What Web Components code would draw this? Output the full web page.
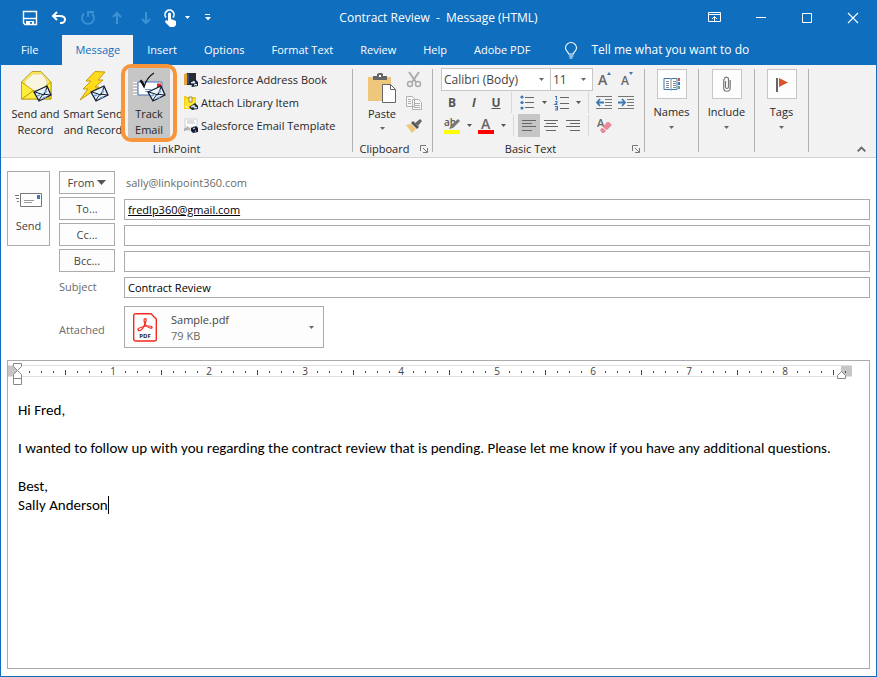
<!DOCTYPE html>
<html lang="en">
<head>
<meta charset="utf-8">
<title>Contract Review - Message (HTML)</title>
<style>
  html, body { height: 100%; margin: 0; }
  body {
    font: 11px/16px "Open Sans", "Noto Sans", sans-serif;
    color: #262626;
    --accent: #106ebe;
    --ribbon: #f2f2f2;
    --line: #ababab;
    --pressed: #c6c6c6;
  }
</style>
</head>
<body>
<mail-window></mail-window>

<script>
const MINI_ENVELOPE = `
  <path d="M1 8 14 2l4 9-12 6z" fill="#e8f3fb" stroke="#111a33" stroke-width="1.300"/>
  <path d="M2 8l9 3 3-8M6 16l4-6 7 1" fill="none" stroke="#111a33" stroke-width="1"/>
  <path d="M4 12l3-1M12 7l2 1M10 14l3-1" stroke="#6aa7d8" stroke-width="1.500"/>`;

const ICONS = {
  save: [16, 16, `<path d="M1.500 1.500h13v13H3L1.500 13z" fill="none" stroke="#fff" stroke-width="1.400"/><path d="M2 8.500h12" stroke="#fff" stroke-width="1.400"/><path d="M4 11h8v4h-2v-3H8v3H4z" fill="#fff"/>`],
  undo: [16, 14, `<path d="M6 1 2 5l4 4M2 5h7c7 0 6 7 1 7H9" fill="none" stroke="#fff" stroke-width="2"/>`],
  redo: [16, 16, `<path d="M4 3.500A6 6 0 1 0 12 3.500M8 7V2h6" fill="none" stroke="#3f92d2" stroke-width="1.800"/>`],
  up: [12, 14, `<path d="M6 13V2M2 6l4-4 4 4" fill="none" stroke="#3f92d2" stroke-width="2"/>`],
  down: [12, 14, `<path d="M6 1v11M2 8l4 4 4-4" fill="none" stroke="#3f92d2" stroke-width="2"/>`],
  touch: [14, 18, `<path d="M3 8.500a4.500 4.500 0 1 1 7 0" fill="none" stroke="#fff" stroke-width="1.600"/><path d="M5 5a1.500 1.500 0 0 1 3 0v5l5 2v4l-2 2H7l-5-5 1-2 2 1z" fill="#fff"/>`],
  caret: [5, 3, `<path d="M0 0h5L2.500 3z" fill="currentColor"/>`],
  customize: [6, 7, `<path d="M0 .5h5" stroke="#fff"/><path d="M0 3h6L3 6.500z" fill="#fff"/>`],
  display: [14, 11, `<path d="M.5.5h12v9H.5zM.5 2.500h12M6.500 9.500V5M4 7l2.500-2.500L9 7" fill="none" stroke="#fff"/>`],
  minimize: [10, 1, `<path d="M0 .5h10" stroke="#fff"/>`],
  maximize: [10, 10, `<path d="M.5.5h9v9h-9z" fill="none" stroke="#fff"/>`],
  close: [10, 10, `<path d="M0 0l10 10M10 0 0 10" stroke="#fff" stroke-width="1.100"/>`],
  bulb: [12, 17, `<path d="M3.500 12c0-2.500-3-3-3-6a5.400 5.400 0 0 1 11 0c0 3-3 3.500-3 6zM4 14h4.500M4.500 16h3" fill="none" stroke="#fff" stroke-width="1.100"/>`],
  sendRecord: [32, 32, `<path d="M1.500 12 12 1.500h9l10 10.500v17h-29.500z" fill="#ffe640" stroke="#b3a13a"/><path d="M5 11 13 4h9l5 7v8l-11 4-11-4z" fill="#faf5df" stroke="#e3d9a0"/><path d="M1.500 12v17H31V12L19 21h-5z" fill="#ffec3d" stroke="#c5a60a"/><path d="M2 29l12-9M31 29 19 20" stroke="#b79a10"/><g transform="translate(13 14)">${MINI_ENVELOPE}</g>`],
  smartSend: [32, 32, `<path d="M18 1.500 28 2l-7 8h5l-8 7h4L3 30l8-11H6l8-8H9z" fill="#ffdb1b" stroke="#c49a10"/><g transform="translate(13 14)">${MINI_ENVELOPE}</g>`],
  trackEmail: [34, 32, `<path d="M1 12.500h4M1 15.500h4M1 18.500h4M1 21.500h4M1 24.500h4" stroke="#fff"/><path d="M6 12h24v13H6z" fill="#fff" stroke="#4d73b4"/><path d="M25 13.500h4v4h-4z" fill="#e2231a"/><path d="M13 19.500h6M13 21.500h4" stroke="#7395c8"/><path d="M9 11l3 6c2-7 5-11 10-14" fill="none" stroke="#111" stroke-width="1.300"/><path d="M7.500 11l2-1.500 3 4.500v3.500z" fill="#111"/><g transform="translate(15 14)">${MINI_ENVELOPE}</g>`],
  addressBook: [14, 16, `<path d="M0 2l3-1v12H0z" fill="#e8a33a"/><path d="M3 1h9v12H3z" fill="#2b2b33"/><path d="M3.500 2h1v10h-1z" fill="#4a76b8"/><path d="M5 11l6-4 3 3v4l-6 1z" fill="#1c2537"/><path d="M7 11l3-2 1 2zM10 13l2-1 1 1zM7 13l1 1" fill="#dbeaf5" stroke="#dbeaf5" stroke-width=".8"/>`],
  library: [14, 16, `<path d="M0 1h2l1 1h9v12H0z" fill="#f0cf15"/><path d="M1 4h10v9H1z" fill="#ffe52e"/><path d="M5 2h3v5H5z" fill="#eef3f5" stroke="#8a7a25" stroke-width=".8"/><path d="M1 11l3 2" stroke="#fff"/><path d="M5 12l6-4 3 3v3l-6 1z" fill="#1c2537"/><path d="M7 12l3-2 1 2zM10 13l2-1 1 1z" fill="#dbeaf5" stroke="#dbeaf5" stroke-width=".8"/>`],
  template: [14, 16, `<path d="M1 1h12v9H1z" fill="#fff" stroke="#d0d0d0"/><path d="M3 3h7M3 5h8" stroke="#b6bcc4"/><path d="M0 7l6 2 4-1v5H1z" fill="#dcdcdc"/><path d="M0 13l4-4M0 11h6" stroke="#999"/><path d="M7 10l5-2 2 2v4l-5 1-2-2z" fill="#131b36"/><path d="M9 11l2-1M11 13h1" stroke="#fff"/>`],
  paste: [28, 30, `<path d="M0 4h23v24H0z" fill="#eec67c"/><path d="M5 7V3h4V1l2-1h3l1 1v2h4v4z" fill="#666"/><path d="M11 2h2v2h-2z" fill="#fff"/><path d="M14.500 11.500h8l5 5v13h-13z" fill="#fff" stroke="#666"/><path d="M22.500 11.500v5h5" fill="none" stroke="#666"/>`],
  cut: [16, 16, `<path d="M3 0l7 10M13 0 6 10" stroke="#aaa" stroke-width="2"/><circle cx="4" cy="12" r="2.500" fill="none" stroke="#aaa" stroke-width="1.500"/><circle cx="12" cy="12" r="2.500" fill="none" stroke="#aaa" stroke-width="1.500"/>`],
  copy: [16, 14, `<path d="M.5.5h6l2 2v8h-8zM6.500 3.500h6l3 3v7h-9z" fill="#f8f8f8" stroke="#b0b0b0"/><path d="M2 3.500h3M2 5.500h3M2 7.500h3M8 7.500h6M8 9.500h6M8 11.500h6" stroke="#b0b0b0"/>`],
  painter: [16, 14, `<path d="M0 6l5-1 5 5-4 4z" fill="#eec67c"/><path d="M5 4l2-2 6 6-2 2z" fill="#555"/><path d="M9 4l5-4 2 2-4 5z" fill="#666"/>`],
  bullets: [15, 15, `<circle cx="2" cy="2" r="1.600" fill="#3c78b4"/><circle cx="2" cy="7.500" r="1.600" fill="#3c78b4"/><circle cx="2" cy="13" r="1.600" fill="#3c78b4"/><path d="M5 2.500h9M5 7.500h9M5 12.500h9" stroke="#666"/>`],
  numbering: [15, 16, `<path d="M1 1.500h1.500V5M1 6.500h2v1.500L1 9.500h2.500M1 11.500h2.500v3.500H1M1.500 13.200h2" fill="none" stroke="#3c78b4" stroke-width="1.100"/><path d="M6 2.500h9M6 8.500h9M6 13.500h9" stroke="#666"/>`],
  outdent: [16, 13, `<path d="M0 .5h16M9 3.500h7M9 6.500h7M9 9.500h7M0 12.500h16" stroke="#777"/><path d="M1 6.500h7M4 3 1 6.500 4 10" fill="none" stroke="#3c78b4" stroke-width="1.800"/>`],
  indent: [16, 13, `<path d="M0 .5h16M9 3.500h7M9 6.500h7M9 9.500h7M0 12.500h16" stroke="#777"/><path d="M0 6.500h7M4 3l3 3.500L4 10" fill="none" stroke="#3c78b4" stroke-width="1.800"/>`],
  alignLeft: [14, 11, `<path d="M0 .5h14M0 3.500h10M0 6.500h14M0 10.500h10" stroke="#666"/>`],
  alignCenter: [14, 11, `<path d="M0 .5h14M2 3.500h10M0 6.500h14M2 10.500h10" stroke="#666"/>`],
  alignRight: [14, 11, `<path d="M0 .5h14M4 3.500h10M0 6.500h14M4 10.500h10" stroke="#666"/>`],
  highlighter: [16, 16, `<text x="0" y="8" font-size="10" font-weight="600" fill="#555">ab</text><path d="M14 1l2 2-7 7-4 1 2-4z" fill="#777"/><path d="M0 12h16v4H0z" fill="#ff0"/>`],
  fontColor: [16, 16, `<text x="3" y="11" font-size="14" font-weight="600" fill="#666">A</text><path d="M0 12h16v4H0z" fill="#f00"/>`],
  growFont: [14, 15, `<text x="1" y="13" font-size="14" font-weight="600" fill="#666">A</text><path d="M10 3l2-3 2 3z" fill="#3c78b4"/>`],
  shrinkFont: [14, 15, `<text x="2" y="13" font-size="12" font-weight="600" fill="#666">A</text><path d="M10 0h4l-2 3z" fill="#3c78b4"/>`],
  eraser: [15, 16, `<text x="0" y="9" font-size="11" font-weight="600" fill="#666">A</text><path d="M3 12l7-8h2l3 3-8 8H5z" fill="#e88a9a"/><path d="M5 9l5 4" stroke="#fff"/>`],
  launcher: [8, 8, `<path d="M.5 6V.5H6M3 3l4 4M7.500 3v4.500H3" fill="none" stroke="#777"/>`],
  names: [17, 14, `<path d="M1 1.500h6l1 .5 1-.5h5v11H9l-1 .5-1-.5H1z" fill="#fff" stroke="#3c78b4"/><path d="M8 2v10M3 4.500h3M3 6.500h3M3 8.500h3M3 10.500h3M10 4.500h3M10 6.500h3M10 8.500h3M10 10.500h3" stroke="#888"/><path d="M15 1h2v3h-2z" fill="#d9532c"/><path d="M15 5h2v3h-2z" fill="#3c78b4"/><path d="M15 9h2v3h-2z" fill="#5fa08a"/>`],
  clip: [8, 16, `<path d="M2.500 5v6a1.500 1.500 0 0 0 3 0V3.500a2 2 0 0 0-4-.5L.7 4v8a3.200 3.200 0 0 0 6.500 0V4" fill="none" stroke="#777" stroke-width="1.200"/>`],
  flag: [12, 15, `<path d="M0 1h2v14H0z" fill="#666"/><path d="M3 1l9 4.500L3 10z" fill="#d9532c"/>`],
  collapse: [9, 6, `<path d="M.7 5.300 4.500 1.500l3.800 3.800" fill="none" stroke="#666" stroke-width="1.800"/>`],
  send: [28, 14, `<path d="M0 2.500h4M1 5.500h3M2 8.500h2" stroke="#777"/><path d="M5.500.5h21v13h-21z" fill="#fff" stroke="#777"/><path d="M22 2h3v4h-3z" fill="#3c78b4"/><path d="M9 7.500h10M9 9.500h8" stroke="#999"/>`],
  triangle: [9, 5, `<path d="M0 0h9L4.500 5z" fill="#555"/>`],
  pdf: [24, 29, `<path d="M3 .7h15l5.300 5.300v20a2 2 0 0 1-2 2H3a2 2 0 0 1-2.300-2V3A2 2 0 0 1 3 .7z" fill="#fff" stroke="#f42a1d" stroke-width="1.400"/><path d="M5 17c-1-2 6-4 11-4 4 0 4 3 1 2-4-1-6-5-6-8 0-2 3-2 2 1-1 4-5 12-8 9z" fill="none" stroke="#f42a1d" stroke-width="1.200"/><text x="12" y="25" text-anchor="middle" font-size="6" font-weight="700" fill="#222">PDF</text>`]
};

function defineElement(name, template) {
  customElements.define(name, class extends HTMLElement {
    connectedCallback() {
      if (this.shadowRoot) return;
      this.attachShadow({ mode: 'open' });
      this.shadowRoot.innerHTML = typeof template === 'function' ? template(this) : template;
    }
  });
}

defineElement('ui-icon', el => {
  const [width, height, body] = ICONS[el.getAttribute('name')];
  return `
    <style>
      :host { display: inline-flex; flex: none; }
      svg { display: block; overflow: visible; }
    </style>
    <svg width="${width}" height="${height}" viewBox="0 0 ${width} ${height}" aria-hidden="true">${body}</svg>`;
});

// Plain button that holds one glyph; its size comes from --w and --h.
defineElement('icon-button', el => `
  <style>
    :host { display: inline-flex; flex: none; }
    button {
      display: flex; align-items: center; justify-content: center;
      width: var(--w, 22px); height: var(--h, 23px);
      padding: 0; border: 0; background: transparent;
      font: inherit; color: inherit;
    }
    :host([pressed]) button { background: var(--pressed); }
  </style>
  <button type="button" aria-label="${el.getAttribute('label')}">
    <slot>${el.hasAttribute('icon') ? `<ui-icon name="${el.getAttribute('icon')}"></ui-icon>` : ''}</slot>
  </button>`);

defineElement('title-bar', `
  <style>
    :host {
      display: grid; grid-template-columns: 1fr auto 1fr; align-items: center;
      height: 35px; background: var(--accent); color: #fff; font-size: 12px;
    }
    .quick { display: flex; padding-left: 14px; --w: 29px; --h: 35px; }
    .touch { --w: 20px; }
    .more { --w: 14px; }
    .customize { --w: 28px; }
    h1 { margin: 0; font: inherit; white-space: pre; }
    .controls { display: flex; justify-content: flex-end; --w: 46px; --h: 32px; }
  </style>
  <div class="quick">
    <icon-button icon="save" label="Save"></icon-button>
    <icon-button icon="undo" label="Undo"></icon-button>
    <icon-button icon="redo" label="Redo"></icon-button>
    <icon-button icon="up" label="Previous"></icon-button>
    <icon-button icon="down" label="Next"></icon-button>
    <icon-button class="touch" icon="touch" label="Touch mode"></icon-button>
    <icon-button class="more" icon="caret" label="Touch options"></icon-button>
    <icon-button class="customize" icon="customize" label="Customize toolbar"></icon-button>
  </div>
  <h1><slot></slot></h1>
  <div class="controls">
    <icon-button icon="display" label="Ribbon display"></icon-button>
    <icon-button icon="minimize" label="Minimize"></icon-button>
    <icon-button icon="maximize" label="Maximize"></icon-button>
    <icon-button icon="close" label="Close"></icon-button>
  </div>`);

defineElement('ribbon-tabs', `
  <style>
    :host { display: flex; gap: 1px; height: 30px; padding-left: 6px; background: var(--accent); color: #fff; }
    button {
      padding: 0 13px; border: 0; background: transparent;
      font: inherit; color: inherit; white-space: nowrap;
    }
    .file { padding: 0 14px; margin-right: 9px; }
    button[aria-selected="true"] { background: var(--ribbon); color: var(--accent); }
    .tell { display: flex; align-items: center; gap: 14px; padding-left: 21px; font-size: 12px; }
  </style>
  <button type="button" role="tab" class="file">File</button>
  <button type="button" role="tab" aria-selected="true">Message</button>
  <button type="button" role="tab">Insert</button>
  <button type="button" role="tab">Options</button>
  <button type="button" role="tab">Format Text</button>
  <button type="button" role="tab">Review</button>
  <button type="button" role="tab">Help</button>
  <button type="button" role="tab">Adobe PDF</button>
  <button type="button" class="tell"><ui-icon name="bulb"></ui-icon>Tell me what you want to do</button>`);

defineElement('ribbon-group', el => `
  <style>
    :host { display: flex; flex: none; }
    section { display: flex; flex: 1; flex-direction: column; }
    .content { display: flex; height: 73px; }
    footer { display: flex; align-items: center; height: 16px; }
    footer span { flex: 1; text-align: center; }
    icon-button { --w: 16px; --h: 16px; }
    hr { width: 1px; margin: 1px 0 5px; border: 0; background: #b1b1b1; }
  </style>
  <section>
    <div class="content"><slot></slot></div>
    <footer>
      <span>${el.getAttribute('label') || ''}</span>
      ${el.hasAttribute('launcher') ? '<icon-button icon="launcher" label="More settings"></icon-button>' : ''}
    </footer>
  </section>
  <hr>`);

defineElement('ribbon-tile', el => `
  <style>
    :host { display: block; position: relative; flex: none; }
    button {
      position: relative; display: flex; flex-direction: column; align-items: center;
      width: 100%; height: 70px; padding: 0; border: 0; background: transparent;
      font: inherit; color: inherit; text-align: center; white-space: pre;
    }
    .art { box-sizing: border-box; height: 38px; padding-top: 2px; }
    :host([highlighted]) { z-index: 1; }
    :host([highlighted]) button { background: var(--pressed); }
    :host([highlighted])::before {
      content: ""; position: absolute; inset: -4px -7px;
      border: 4px solid #f8953a; border-radius: 10px; background: var(--ribbon);
    }
  </style>
  <button type="button">
    <span class="art"><ui-icon name="${el.getAttribute('icon')}"></ui-icon></span>
    <slot></slot>
  </button>`);

defineElement('ribbon-item', el => `
  <style>
    :host { display: block; }
    button {
      display: flex; align-items: center; gap: 3px; height: 23px;
      padding: 0; border: 0; background: transparent;
      font: inherit; color: inherit; white-space: nowrap;
    }
  </style>
  <button type="button"><ui-icon name="${el.getAttribute('icon')}"></ui-icon><slot></slot></button>`);

defineElement('framed-menu', el => `
  <style>
    :host { display: block; flex: 1; }
    button {
      display: flex; flex-direction: column; align-items: center; width: 100%;
      padding: 1px 0 0; border: 0; background: transparent; font: inherit; color: inherit;
    }
    .frame {
      display: flex; align-items: center; justify-content: center; box-sizing: border-box;
      width: 30px; height: 30px; margin-bottom: 5px; border: 1px solid var(--pressed); background: #fdfdfd;
    }
    .arrow { margin-top: 6px; color: #666; }
  </style>
  <button type="button">
    <span class="frame"><ui-icon name="${el.getAttribute('icon')}"></ui-icon></span>
    <slot></slot>
    <ui-icon class="arrow" name="caret"></ui-icon>
  </button>`);

defineElement('ribbon-select', el => `
  <style>
    :host { display: grid; grid-template-columns: 1fr 12px; align-items: center; }
    select {
      grid-area: 1 / 1 / 2 / 3; appearance: none; box-sizing: border-box; width: 100%; height: 23px;
      padding: 0 0 0 2px; border: 1px solid var(--pressed); border-radius: 0; background: #fff;
      font: inherit; font-size: 12px; color: #444;
    }
    ui-icon { grid-area: 1 / 2; color: #666; pointer-events: none; }
  </style>
  <select aria-label="${el.getAttribute('label')}"><option>${el.getAttribute('value')}</option></select>
  <ui-icon name="caret"></ui-icon>`);

defineElement('mail-ribbon', `
  <style>
    :host {
      display: flex; height: 89px; padding-top: 3px;
      background: var(--ribbon); border-bottom: 1px solid #d2d2d2;
    }
    .tiles { display: flex; align-items: flex-start; gap: 2px; padding: 0 14px 0 8px; }
    .tiles ribbon-tile { width: 53px; }
    .tiles .smart { width: 58px; }
    .tiles .track { width: 42px; margin-left: 4px; }
    .linkpoint { width: 352px; }
    .items { flex: none; }
    .paste {
      display: flex; flex-direction: column; align-items: center; width: 48px; margin-left: 5px;
      padding: 5px 0 0; border: 0; background: transparent; font: inherit; color: inherit;
    }
    .paste ui-icon { margin-bottom: 3px; }
    .paste .arrow { margin: 5px 0 0; color: #666; }
    .edit { display: flex; flex-direction: column; padding-right: 10px; --w: 16px; }
    .text { padding: 0 7px 0 8px; }
    .row { display: flex; align-items: center; height: 23px; color: #555; }
    .row b, .row i, .row u { font-size: 12px; font-weight: 700; }
    .family { width: 110px; margin-right: -1px; }
    .size { width: 43px; }
    .drop { --w: 12px; }
    hr { width: 1px; height: 21px; margin: 0 4px; border: 0; background: #d8d8d8; }
    .names, .tags { width: 53px; }
    .include { width: 55px; }
    .collapse { margin: auto 3px 0 auto; --w: 24px; --h: 16px; }
  </style>
  <ribbon-group class="linkpoint" label="LinkPoint">
    <div class="tiles">
      <ribbon-tile icon="sendRecord">Send and
Record</ribbon-tile>
      <ribbon-tile class="smart" icon="smartSend">Smart Send
and Record</ribbon-tile>
      <ribbon-tile class="track" icon="trackEmail" highlighted>Track
Email</ribbon-tile>
    </div>
    <div class="items">
      <ribbon-item icon="addressBook">Salesforce Address Book</ribbon-item>
      <ribbon-item icon="library">Attach Library Item</ribbon-item>
      <ribbon-item icon="template">Salesforce Email Template</ribbon-item>
    </div>
  </ribbon-group>
  <ribbon-group label="Clipboard" launcher>
    <button type="button" class="paste">
      <ui-icon name="paste"></ui-icon>Paste<ui-icon class="arrow" name="caret"></ui-icon>
    </button>
    <div class="edit">
      <icon-button icon="cut" label="Cut"></icon-button>
      <icon-button icon="copy" label="Copy"></icon-button>
      <icon-button icon="painter" label="Format painter"></icon-button>
    </div>
  </ribbon-group>
  <ribbon-group label="Basic Text" launcher>
    <div class="text">
      <div class="row">
        <ribbon-select class="family" label="Font" value="Calibri (Body)"></ribbon-select>
        <ribbon-select class="size" label="Font size" value="11"></ribbon-select>
        <icon-button icon="growFont" label="Grow font"></icon-button>
        <icon-button icon="shrinkFont" label="Shrink font"></icon-button>
      </div>
      <div class="row">
        <icon-button label="Bold"><b>B</b></icon-button>
        <icon-button label="Italic"><i>I</i></icon-button>
        <icon-button label="Underline"><u>U</u></icon-button>
        <hr>
        <icon-button icon="bullets" label="Bullets"></icon-button>
        <icon-button class="drop" icon="caret" label="Bullet styles"></icon-button>
        <icon-button icon="numbering" label="Numbering"></icon-button>
        <icon-button class="drop" icon="caret" label="Numbering styles"></icon-button>
        <hr>
        <icon-button icon="outdent" label="Decrease indent"></icon-button>
        <icon-button icon="indent" label="Increase indent"></icon-button>
      </div>
      <div class="row">
        <icon-button icon="highlighter" label="Highlight"></icon-button>
        <icon-button class="drop" icon="caret" label="Highlight colors"></icon-button>
        <icon-button icon="fontColor" label="Font color"></icon-button>
        <icon-button class="drop" icon="caret" label="Font colors"></icon-button>
        <hr>
        <icon-button icon="alignLeft" label="Align left" pressed></icon-button>
        <icon-button icon="alignCenter" label="Center"></icon-button>
        <icon-button icon="alignRight" label="Align right"></icon-button>
        <hr>
        <icon-button icon="eraser" label="Clear formatting"></icon-button>
      </div>
    </div>
  </ribbon-group>
  <ribbon-group><framed-menu class="names" icon="names">Names</framed-menu></ribbon-group>
  <ribbon-group><framed-menu class="include" icon="clip">Include</framed-menu></ribbon-group>
  <ribbon-group><framed-menu class="tags" icon="flag">Tags</framed-menu></ribbon-group>
  <icon-button class="collapse" icon="collapse" label="Collapse ribbon"></icon-button>`);

defineElement('address-row', el => {
  const label = el.getAttribute('label');
  const value = el.getAttribute('value') || '';
  return `
    <style>
      :host { display: flex; align-items: flex-end; gap: 9px; height: 23px; }
      button, label { flex: none; box-sizing: border-box; width: 56px; height: 23px; line-height: 23px; }
      button {
        padding: 0; border: 1px solid var(--line); background: #fdfdfd;
        font: inherit; line-height: 21px; color: #444;
      }
      label { color: #6a6a6a; }
      input {
        flex: 1; min-width: 0; box-sizing: border-box; height: 21px; padding: 0 3px;
        border: 1px solid var(--line); border-radius: 0; background: #fff; font: inherit; color: #000;
      }
      :host([resolved]) input { text-decoration: underline; }
    </style>
    ${el.hasAttribute('plain')
      ? `<label for="value">${label}</label>`
      : `<button type="button">${label}</button>`}
    <input id="value" type="text" aria-label="${label}" value="${value}">`;
});

defineElement('attachment-card', el => `
  <style>
    :host { display: block; width: 200px; }
    button {
      display: flex; align-items: center; box-sizing: border-box; width: 100%; height: 42px;
      padding: 0 9px 0 8px; border: 1px solid var(--line); background: #fdfdfd;
      font: inherit; color: #444; text-align: left;
    }
    .info { flex: 1; margin-left: 14px; padding-top: 2px; }
    .info span { display: block; }
    .size { color: #666; }
    .arrow { color: #666; }
  </style>
  <button type="button">
    <ui-icon name="pdf"></ui-icon>
    <span class="info"><span><slot></slot></span><span class="size">${el.getAttribute('size')}</span></span>
    <ui-icon class="arrow" name="caret"></ui-icon>
  </button>`);

defineElement('message-header', `
  <style>
    :host { display: flex; align-items: flex-start; gap: 9px; }
    .send {
      display: flex; flex: none; flex-direction: column; align-items: center; justify-content: center; gap: 11px;
      box-sizing: border-box; width: 43px; height: 75px; padding: 9px 0 0;
      border: 1px solid var(--line); background: #fdfdfd; font: inherit; color: #444;
    }
    .fields { display: flex; flex: 1; flex-direction: column; gap: 3px; min-width: 0; }
    .line { display: flex; align-items: center; gap: 9px; color: #6a6a6a; }
    .from {
      display: flex; flex: none; align-items: center; justify-content: center; gap: 3px;
      box-sizing: border-box; width: 56px; height: 23px; padding: 0;
      border: 1px solid var(--line); background: #fdfdfd; font: inherit; color: #444;
    }
    .account { padding-left: 2px; }
    .attached { margin-top: 5px; }
    .attached > span { flex: none; width: 56px; padding-top: 6px; }
  </style>
  <button type="button" class="send"><ui-icon name="send"></ui-icon>Send</button>
  <div class="fields">
    <div class="line">
      <button type="button" class="from">From<ui-icon name="triangle"></ui-icon></button>
      <span class="account">sally@linkpoint360.com</span>
    </div>
    <address-row label="To..." value="fredlp360@gmail.com" resolved></address-row>
    <address-row label="Cc..."></address-row>
    <address-row label="Bcc..."></address-row>
    <address-row label="Subject" value="Contract Review" plain></address-row>
    <div class="line attached">
      <span>Attached</span>
      <attachment-card size="79 KB">Sample.pdf</attachment-card>
    </div>
  </div>`);

// Inch ruler: 96px per inch, a dot every eighth, a longer tick at the half.
defineElement('page-ruler', () => {
  const origin = 9;
  let marks = '';
  for (let i = 1; i <= 69; i++) {
    const x = origin + i * 12;
    if (i % 8 === 0) {
      marks += `<text x="${x}" y="12">${i / 8}</text>`;
    } else {
      const tall = i % 8 === 4;
      marks += `<rect x="${x}" y="${tall ? 7 : 8}" width="1" height="${tall ? 5 : 2}"/>`;
    }
  }
  return `
    <style>
      :host { display: block; height: 22px; overflow: hidden; }
      svg { display: block; overflow: visible; }
      text { font-size: 10px; text-anchor: middle; }
    </style>
    <svg width="844" height="22" fill="#444" aria-hidden="true">
      <path d="M0 2.500h844M0 13.500h844" stroke="#e1e1e1"/>
      <path d="M0 3h9v10H0zM833 3h11v10h-11z" fill="#c6c6c6"/>
      ${marks}
      <path d="M5.500.5h8v3l-4 4-4-4zM9.500 7.500l4 4v4h-8v-4zM5.500 15.500h8v6h-8z" fill="#fff" stroke="#888"/>
      <path d="M829.500 15.500v-3l4-4 4 4v3z" fill="#fff" stroke="#888"/>
    </svg>`;
});

defineElement('message-editor', `
  <style>
    :host { display: flex; flex-direction: column; border: 1px solid var(--line); background: #fff; }
    page-ruler { margin-top: 2px; }
    .body {
      flex: 1; padding: 16px 10px; outline: none;
      font: 15px/19px Carlito, Calibri, Lato, sans-serif; font-variant-ligatures: none; color: #000;
    }
    p { margin: 0; min-height: 19px; }
    .cursor { display: inline-block; width: 1px; height: 18px; background: #000; vertical-align: -4px; }
  </style>
  <page-ruler></page-ruler>
  <div class="body" contenteditable="true" role="textbox" aria-multiline="true" aria-label="Message body" spellcheck="false">
    <p>Hi Fred,</p>
    <p></p>
    <p>I wanted to follow up with you regarding the contract review that is pending. Please let me know if you have any additional questions.</p>
    <p></p>
    <p>Best,</p>
    <p>Sally Anderson<span class="cursor"></span></p>
  </div>`);

defineElement('mail-window', `
  <style>
    :host {
      display: flex; flex-direction: column; box-sizing: border-box; min-height: 100vh;
      border: 1px solid var(--accent); border-top: 0; background: #fff;
    }
    main { display: flex; flex: 1; flex-direction: column; gap: 12px; padding: 13px 6px 7px; }
    message-editor { flex: 1; }
  </style>
  <title-bar>Contract Review  -  Message (HTML)</title-bar>
  <ribbon-tabs></ribbon-tabs>
  <mail-ribbon></mail-ribbon>
  <main>
    <message-header></message-header>
    <message-editor></message-editor>
  </main>`);
</script>
</body>
</html>
